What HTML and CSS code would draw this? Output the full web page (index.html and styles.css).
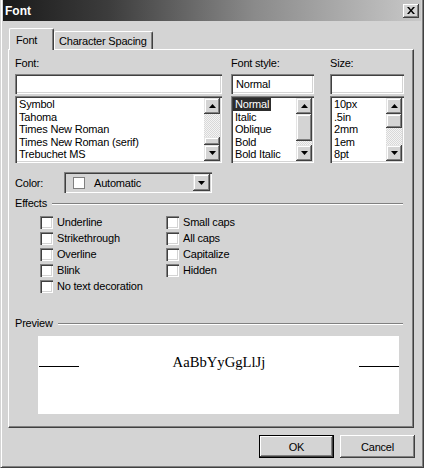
FILE: index.html
```html
<!DOCTYPE html>
<html>
<head>
<meta charset="utf-8">
<title>Font</title>
<link rel="stylesheet" href="styles.css">
</head>
<body>
<div class="window">
  <div class="titlebar">
    <span class="title">Font</span>
    <div class="close"><svg width="8" height="7" viewBox="0 0 8 7"><path d="M0 0h2l2 2.4L6 0h2L5 3.5 8 7H6L4 4.6 2 7H0l3-3.5z" fill="#000"/></svg></div>
  </div>
  <div class="tabs">
    <div class="tab active">Font</div>
    <div class="tab">Character Spacing</div>
  </div>
  <div class="panel">
    <div class="pickers">
      <div class="picker font-col">
        <div class="label">Font:</div>
        <div class="field"></div>
        <div class="listbox">
          <ul class="items">
            <li><span>Symbol</span></li>
            <li><span>Tahoma</span></li>
            <li><span>Times New Roman</span></li>
            <li><span>Times New Roman (serif)</span></li>
            <li><span>Trebuchet MS</span></li>
          </ul>
          <div class="scrollbar">
            <div class="sbtn"><svg width="7" height="4" viewBox="0 0 7 4"><path d="M3.5 0 7 4H0z"/></svg></div>
            <div class="track end"><div class="thumb" style="height:8px"></div></div>
            <div class="sbtn"><svg width="7" height="4" viewBox="0 0 7 4"><path d="M0 0h7L3.5 4z"/></svg></div>
          </div>
        </div>
      </div>
      <div class="picker style-col">
        <div class="label">Font style:</div>
        <div class="field">Normal</div>
        <div class="listbox">
          <ul class="items">
            <li><span class="selected">Normal</span></li>
            <li><span>Italic</span></li>
            <li><span>Oblique</span></li>
            <li><span>Bold</span></li>
            <li><span>Bold Italic</span></li>
          </ul>
          <div class="scrollbar">
            <div class="sbtn"><svg width="7" height="4" viewBox="0 0 7 4"><path d="M3.5 0 7 4H0z"/></svg></div>
            <div class="track"><div class="thumb" style="height:27px"></div></div>
            <div class="sbtn"><svg width="7" height="4" viewBox="0 0 7 4"><path d="M0 0h7L3.5 4z"/></svg></div>
          </div>
        </div>
      </div>
      <div class="picker size-col">
        <div class="label">Size:</div>
        <div class="field"></div>
        <div class="listbox">
          <ul class="items">
            <li><span>10px</span></li>
            <li><span>.5in</span></li>
            <li><span>2mm</span></li>
            <li><span>1em</span></li>
            <li><span>8pt</span></li>
          </ul>
          <div class="scrollbar">
            <div class="sbtn"><svg width="7" height="4" viewBox="0 0 7 4"><path d="M3.5 0 7 4H0z"/></svg></div>
            <div class="track"><div class="thumb" style="height:14px"></div></div>
            <div class="sbtn"><svg width="7" height="4" viewBox="0 0 7 4"><path d="M0 0h7L3.5 4z"/></svg></div>
          </div>
        </div>
      </div>
    </div>

    <div class="color-row">
      <div class="color-label">Color:</div>
      <div class="combo">
        <span class="swatch"></span>
        <span class="combo-text">Automatic</span>
        <div class="drop"><svg width="7" height="4" viewBox="0 0 7 4"><path d="M0 0h7L3.5 4z"/></svg></div>
      </div>
    </div>

    <div class="legend"><span>Effects</span><span class="rule"></span></div>
    <div class="effects">
      <div class="checks first">
        <div class="check"><span class="box"></span>Underline</div>
        <div class="check"><span class="box"></span>Strikethrough</div>
        <div class="check"><span class="box"></span>Overline</div>
        <div class="check"><span class="box"></span>Blink</div>
        <div class="check"><span class="box"></span>No text decoration</div>
      </div>
      <div class="checks">
        <div class="check"><span class="box"></span>Small caps</div>
        <div class="check"><span class="box"></span>All caps</div>
        <div class="check"><span class="box"></span>Capitalize</div>
        <div class="check"><span class="box"></span>Hidden</div>
      </div>
    </div>

    <div class="legend preview-legend"><span>Preview</span><span class="rule"></span></div>
    <div class="preview">
      <div class="sample-row">
        <span class="line"></span>
        <span class="sample">AaBbYyGgLlJj</span>
        <span class="line"></span>
      </div>
    </div>
  </div>
  <div class="buttons">
    <div class="btn default">OK</div>
    <div class="btn">Cancel</div>
  </div>
</div>
</body>
</html>
```

FILE: styles.css
```css
* { box-sizing: border-box; }
html, body { margin: 0; padding: 0; }
body {
  width: 424px;
  height: 468px;
  overflow: hidden;
  background: #d4d4d4;
  font-family: "Liberation Sans", Tahoma, Arial, sans-serif;
  font-size: 11px;
  letter-spacing: -0.2px;
  color: #000;
}

.window {
  width: 424px;
  height: 468px;
  background: #d4d4d4;
  border-left: 1px solid #d4d4d4;
  border-right: 1px solid #404040;
  border-bottom: 1px solid #404040;
  padding: 0 2px 2px 2px;
  box-shadow: inset 1px 0 #fff, inset -1px -1px #808080;
  display: flex;
  flex-direction: column;
}

/* title bar */
.titlebar {
  height: 21px;
  flex: none;
  display: flex;
  align-items: center;
  padding: 0 2px;
  background: linear-gradient(to right, #1a1a1a 0%, #3c3c3c 25%, #8a8a8a 60%, #c8c8c8 100%);
}
.title {
  color: #fff;
  font-weight: bold;
  font-size: 12px;
  letter-spacing: 0;
}
.close {
  margin-left: auto;
  width: 16px;
  height: 14px;
  background: #d4d4d4;
  box-shadow: inset -1px -1px #404040, inset 1px 1px #fff, inset -2px -2px #808080;
  display: flex;
  align-items: center;
  justify-content: center;
  padding-right: 1px;
}

/* tabs */
.tabs {
  display: flex;
  align-items: flex-end;
  height: 21px;
  margin: 7px 0 0 6px;
  flex: none;
}
.tab {
  position: relative;
  height: 18px;
  width: 99px;
  padding-left: 4px;
  display: flex;
  align-items: center;
  background: #d4d4d4;
  border-top: 1px solid #fff;
  border-left: 1px solid #fff;
  border-right: 1px solid #404040;
  border-radius: 2px 2px 0 0;
  box-shadow: inset -1px 0 #808080;
}
.tab.active {
  height: 22px;
  width: 45px;
  padding-left: 6px;
  margin-bottom: -1px;
  z-index: 1;
}

/* panel */
.panel {
  width: 406px;
  height: 379px;
  margin-left: 5px;
  flex: none;
  border-top: 1px solid #fff;
  border-left: 1px solid #fff;
  border-right: 1px solid #404040;
  border-bottom: 1px solid #404040;
  box-shadow: inset -1px -1px #808080;
  padding: 7px 9px 0 6px;
}

.pickers { display: flex; }
.picker { display: flex; flex-direction: column; }
.font-col { width: 207px; }
.style-col { width: 83px; margin-left: 9px; }
.size-col { width: 74px; margin-left: 16px; }

.label { height: 13px; line-height: 13px; }

.field {
  margin-top: 4px;
  height: 20px;
  background: #fff;
  padding: 0 3px 0 5px;
  line-height: 20px;
  box-shadow: inset 1px 1px #808080, inset 2px 2px #404040, inset -1px -1px #fff, inset -2px -2px #d4d4d4;
}
.listbox {
  margin-top: 2px;
  height: 67px;
  background: #fff;
  padding: 2px;
  display: flex;
  box-shadow: inset 1px 1px #808080, inset 2px 2px #404040, inset -1px -1px #fff, inset -2px -2px #d4d4d4;
}
.items {
  list-style: none;
  margin: 0;
  padding: 0;
  flex: 1;
  overflow: hidden;
  white-space: nowrap;
}
.items li { height: 12.6px; line-height: 12.6px; }
.items span { display: inline-block; padding: 0 2px; }
.items .selected { background: #2c2c2c; color: #fff; }

.scrollbar {
  width: 16px;
  display: flex;
  flex-direction: column;
}
.sbtn {
  width: 16px;
  height: 16px;
  flex: none;
  background: #d4d4d4;
  box-shadow: inset -1px -1px #404040, inset 1px 1px #e4e4e4, inset -2px -2px #808080, inset 2px 2px #fff;
  display: flex;
  align-items: center;
  justify-content: center;
}
.sbtn svg { fill: #000; }
.track {
  flex: 1;
  display: flex;
  flex-direction: column;
  background: repeating-conic-gradient(#f4f4f4 0 25%, #d8d8d8 0 50%) 0 0 / 2px 2px;
}
.track.end { justify-content: flex-end; }
.thumb {
  background: #d4d4d4;
  box-shadow: inset -1px -1px #404040, inset 1px 1px #e4e4e4, inset -2px -2px #808080, inset 2px 2px #fff;
}

/* color */
.color-row {
  margin-top: 9px;
  display: flex;
  align-items: center;
}
.color-label { width: 49px; }
.combo {
  width: 148px;
  height: 21px;
  display: flex;
  align-items: center;
  padding: 2px;
  padding-left: 9px;
  box-shadow: inset 1px 1px #808080, inset 2px 2px #404040, inset -1px -1px #fff, inset -2px -2px #d4d4d4;
}
.swatch {
  width: 12px;
  height: 12px;
  background: #fff;
  border: 1px solid #808080;
}
.combo-text { margin-left: 9px; }
.drop {
  margin-left: auto;
  width: 17px;
  height: 17px;
  background: #d4d4d4;
  box-shadow: inset -1px -1px #404040, inset 1px 1px #e4e4e4, inset -2px -2px #808080, inset 2px 2px #fff;
  display: flex;
  align-items: center;
  justify-content: center;
}

/* group legends */
.legend {
  margin-top: 4px;
  height: 13px;
  line-height: 13px;
  display: flex;
  align-items: center;
}
.rule {
  flex: 1;
  margin: 0 1px 0 5px;
  height: 2px;
  border-top: 1px solid #808080;
  border-bottom: 1px solid #fff;
}
.preview-legend { margin-top: 23px; }

.effects {
  margin: 4px 0 0 25px;
  display: flex;
}
.checks { display: flex; flex-direction: column; }
.checks.first { width: 126px; }
.check {
  height: 16px;
  display: flex;
  align-items: center;
  gap: 4px;
}
.box {
  width: 13px;
  height: 13px;
  background: #fff;
  box-shadow: inset 1px 1px #808080, inset 2px 2px #404040, inset -1px -1px #fff, inset -2px -2px #d4d4d4;
}

/* preview */
.preview {
  margin: 6px 0 0 23px;
  width: 361px;
  height: 78px;
  background: #fff;
  padding: 17px 0 0 1px;
}
.sample-row {
  display: flex;
  align-items: baseline;
  line-height: 18px;
}
.line {
  width: 40px;
  height: 1px;
  background: #000;
}
.sample {
  flex: 1;
  text-align: center;
  font-family: "Liberation Serif", "Times New Roman", serif;
  font-size: 14.67px;
  letter-spacing: 0;
}

/* buttons */
.buttons {
  margin-top: 7px;
  display: flex;
  justify-content: flex-end;
  gap: 6px;
  padding-right: 6px;
}
.btn {
  width: 75px;
  height: 23px;
  display: flex;
  align-items: center;
  justify-content: center;
  background: #d4d4d4;
  box-shadow: inset -1px -1px #404040, inset 1px 1px #fff, inset -2px -2px #808080;
}
.btn.default {
  border: 1px solid #000;
}
```
